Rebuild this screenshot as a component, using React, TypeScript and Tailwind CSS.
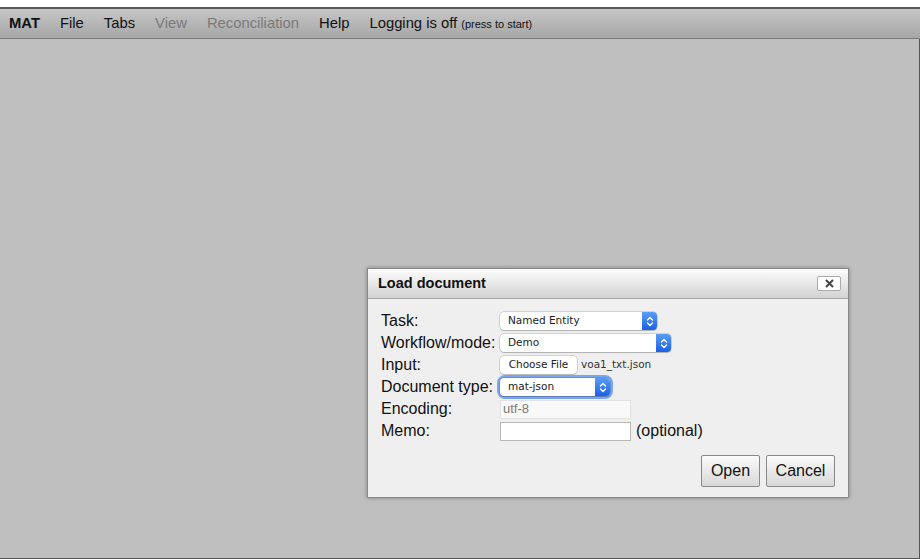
import React from 'react'

const sans = { fontFamily: '"Liberation Sans", Arial, sans-serif' }
const sys = { fontFamily: '"DejaVu Sans", Verdana, sans-serif' }

function Chevrons() {
  return (
    <svg width="8" height="11" viewBox="0 0 8 11" fill="none">
      <path d="M1.5 4 L4 1.5 L6.5 4" stroke="white" strokeWidth="1.4" strokeLinecap="round" strokeLinejoin="round" />
      <path d="M1.5 7 L4 9.5 L6.5 7" stroke="white" strokeWidth="1.4" strokeLinecap="round" strokeLinejoin="round" />
    </svg>
  )
}

function FakeSelect({ value, width }: { value: string; width: string }) {
  return (
    <div
      className={`flex h-[18px] ${width} items-stretch rounded-[4px] bg-white shadow-[0_0_0_0.5px_rgba(0,0,0,0.25),0_1px_1px_rgba(0,0,0,0.15)]`}
    >
      <div className="flex flex-1 items-center pl-[8px] text-[10.5px] text-[#222]" style={sys}>
        {value}
      </div>
      <div className="flex w-[15px] items-center justify-center rounded-r-[4px] bg-gradient-to-b from-[#5a9cf8] to-[#1b5fe6]">
        <Chevrons />
      </div>
    </div>
  )
}

function Row({ label, children }: { label: string; children: React.ReactNode }) {
  return (
    <div className="flex h-[22px] items-center">
      <div className="w-[119px] text-[16px] text-[#111]">{label}</div>
      <div className="flex items-center">{children}</div>
    </div>
  )
}

export default function App() {
  const menu = [
    { label: 'File', off: false },
    { label: 'Tabs', off: false },
    { label: 'View', off: true },
    { label: 'Reconciliation', off: true },
    { label: 'Help', off: false },
  ]

  return (
    <div className="relative flex h-[559px] w-[920px] flex-col overflow-hidden bg-white" style={sans}>
      {/* Menu bar */}
      <div className="mt-[7px] flex h-[32px] items-center gap-5 border-t-2 border-b border-t-[#5a5a5a] border-b-[#7c7c7c] bg-gradient-to-b from-[#c6c6c6] to-[#a6a6a6] pl-[9px] text-[14.8px] text-[#111]">
        <span className="font-bold">MAT</span>
        {menu.map((m) => (
          <span key={m.label} className={m.off ? 'text-[#7a7a7a]' : ''}>
            {m.label}
          </span>
        ))}
        <span>
          Logging is off <span className="text-[11px]">(press to start)</span>
        </span>
      </div>

      {/* Workspace */}
      <div className="flex-1 border-r border-b border-[#555] bg-[#bfbfbf]" />

      {/* Load document dialog */}
      <div className="absolute left-[367px] top-[268px] w-[482px] border border-[#8a8a8a] bg-[#efefef] shadow-[0_0_4px_rgba(0,0,0,0.35)]">
        <div className="flex h-[30px] items-center justify-between border-b border-[#a8a8a8] bg-gradient-to-b from-[#fdfdfd] to-[#d3d3d3] pl-[10px] pr-[7px]">
          <span className="text-[14.5px] font-bold text-[#111]">Load document</span>
          <button className="flex h-[15px] w-[24px] items-center justify-center rounded-[2px] border border-[#aaa] bg-white">
            <svg width="9" height="9" viewBox="0 0 9 9">
              <path d="M1 1 L8 8 M8 1 L1 8" stroke="#444" strokeWidth="2" />
            </svg>
          </button>
        </div>

        <div className="px-[13px] pt-[11px] pb-[10px]">
          <Row label="Task:">
            <FakeSelect value="Named Entity" width="w-[157px]" />
          </Row>
          <Row label="Workflow/mode:">
            <FakeSelect value="Demo" width="w-[171px]" />
          </Row>
          <Row label="Input:">
            <div
              className="flex h-[18px] w-[77px] items-center justify-center rounded-[4px] bg-white text-[10.5px] text-[#222] shadow-[0_0_0_0.5px_rgba(0,0,0,0.25),0_1px_1px_rgba(0,0,0,0.12)]"
              style={sys}
            >
              Choose File
            </div>
            <span className="ml-[4px] text-[10.5px] text-[#333]" style={sys}>
              voa1_txt.json
            </span>
          </Row>
          <Row label="Document type:">
            <div className="rounded-[5px] shadow-[0_0_0_3px_#7aa6f0]">
              <FakeSelect value="mat-json" width="w-[110px]" />
            </div>
          </Row>
          <Row label="Encoding:">
            <div className="flex h-[19px] w-[131px] items-center border border-[#e2e2e2] bg-[#f9f9f9] pl-[2px] text-[13px] text-[#7a7a7a]">
              utf-8
            </div>
          </Row>
          <Row label="Memo:">
            <div className="h-[19px] w-[131px] border border-[#b8b8b8] bg-white" />
            <span className="ml-[5px] text-[16px] text-[#111]">(optional)</span>
          </Row>

          <div className="mt-[13px] flex justify-end gap-[6px]">
            <button className="h-[32px] w-[59px] rounded-[2px] border border-[#8a8a8a] bg-gradient-to-b from-[#fafafa] to-[#d8d8d8] text-[16px] text-[#111]">
              Open
            </button>
            <button className="h-[32px] w-[69px] rounded-[2px] border border-[#8a8a8a] bg-gradient-to-b from-[#fafafa] to-[#d8d8d8] text-[16px] text-[#111]">
              Cancel
            </button>
          </div>
        </div>
      </div>
    </div>
  )
}
